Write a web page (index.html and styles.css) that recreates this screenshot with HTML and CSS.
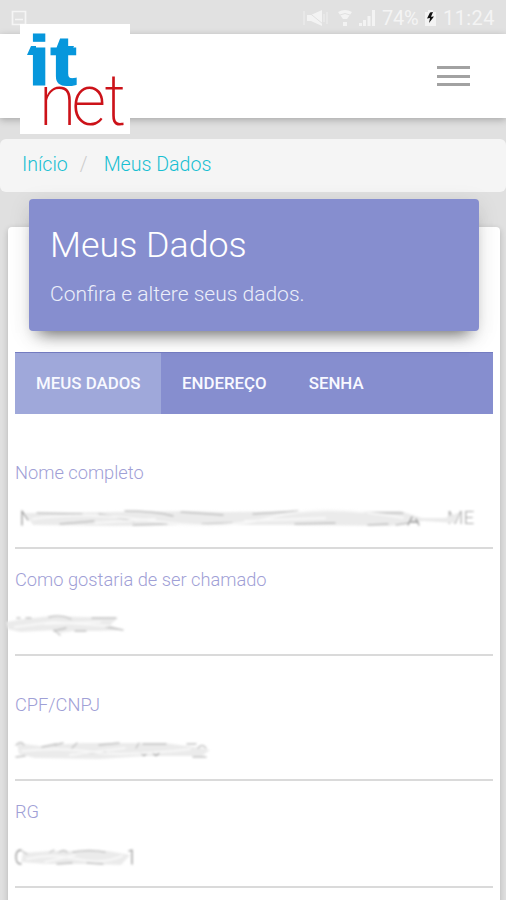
FILE: index.html
```html
<!DOCTYPE html>
<html lang="pt-BR">
<head>
<meta charset="utf-8">
<meta name="viewport" content="width=device-width, initial-scale=1">
<title>Meus Dados</title>
<link rel="stylesheet" href="styles.css">
</head>
<body>
<div class="status">
  <svg class="status-shot" width="16" height="16" viewBox="0 0 16 16"><path d="M1.5 1.5h13v13h-13zM4 9.5h8" /></svg>
  <div class="status-right">
    <svg class="mute" width="26" height="18" viewBox="0 0 26 18"><path class="line" d="M2 2v14M25 3v12M22 5v8"/><path d="M5 6h4l11-5v16l-11-5H5z"/><path class="cut" d="M5 2l16 13"/></svg>
    <svg class="wifi" width="16" height="18" viewBox="0 0 16 18"><path d="M1 3Q8-1 15 3L10 10H6zM6 13h4v4H6z"/><path class="cut" d="M3 6q5-3 10 0"/></svg>
    <svg class="signal" width="18" height="18" viewBox="0 0 18 18"><path d="M1 14h3v3H1zM5 11h3v6H5zM9.500 7h3v10h-3zM14 1h3v16h-3z"/></svg>
    <span class="percent">74%</span>
    <svg class="battery" width="11" height="16" viewBox="0 0 11 16"><path d="M3 0h5v2h3v14H0V2h3z"/><path class="bolt" d="M5 2.500L2 8.500l3-.5-1 5L9 6.500l-3 .3L8 2z"/></svg>
    <span class="clock">11:24</span>
  </div>
</div>
<header class="navbar">
  <a class="logo">
    <svg width="110" height="110" viewBox="0 0 110 110">
      <text class="logo-it" x="8" y="60.500" textLength="49" lengthAdjust="spacingAndGlyphs">it</text>
      <path class="logo-serif" d="M11 22h5v9H7zM48 22h6l-4 9h-2z"/>
      <text class="logo-net" transform="translate(0 101) scale(.93 1)" x="20.500 55.500 91" y="0">net</text>
    </svg>
  </a>
  <button class="menu" aria-label="Menu"><i></i><i></i><i></i></button>
</header>
<nav class="breadcrumb"><a>Início</a><span class="slash">/</span><a>Meus Dados</a></nav>
<main class="card">
  <div class="card-header">
    <h1>Meus Dados</h1>
    <p>Confira e altere seus dados.</p>
  </div>
  <ul class="tabs">
    <li class="active">MEUS DADOS</li><li>ENDEREÇO</li><li>SENHA</li>
  </ul>
  <form class="fields">
    <div class="field">
      <label>Nome completo</label>
      <svg class="value" width="478" height="40" viewBox="0 0 478 40">
        <path class="frag" d="M7 26V12l6 9"/>
        <text class="ghost" x="432" y="25">ME</text>
        <path class="smear" d="M10 14L90 13 175 12 210 13 300 12 385 12 407 19 430 19 445 13 440 24 408 22 375 27 270 26 180 26 100 27 18 26z"/>
        <path class="dark" d="M22 14l45 1M110 12q30 0 48 5M166 13l42 3M238 15l45-3M350 14l38 0M45 25l34-3M84 15l35 7M118 26l34-1M187 25l30-1M280 25l40-1M353 26l20-1M381 26l13-2"/>
        <path class="frag" d="M393 26l4-8M404 26l-3-6M396 23h7"/>
        <path class="light" d="M18 20q50-8 120 2t120-4 130 1M80 24l60-4M230 22l80-3"/>
      </svg>
    </div>
    <div class="field second">
      <label>Como gostaria de ser chamado</label>
      <svg class="value" width="478" height="40" viewBox="0 0 478 40">
        <path class="smear" d="M-9 16L9 13 36 10 103 12 95 19 108 24 85 25 58 25 45 27 42 24 5 26-7 23z"/>
        <path class="dark" d="M2 12h3M11 12h5M34 11q12-3 22 2M77 12h24M39 25l12-3M45 29l-6-5M60 25h11M91 21l17 3"/>
        <path class="light" d="M0 21l38-5 55 4M30 18l55-2"/>
      </svg>
    </div>
    <div class="field third">
      <label>CPF/CNPJ</label>
      <svg class="value" width="478" height="40" viewBox="0 0 478 40">
        <path class="smear" d="M2 12L25 15 67 12 150 12 186 17 195 19 187 25 130 25 85 28 20 27 4 23z"/>
        <path class="dark" d="M1 14q5-5 8 0M1 26l9-1M27 16l14-3M40 14l8-2M57 17l5-5M84 14l20-2M124 12l-3 5M128 13h23M172 13h9M183 17q4-5 8 0M178 26h13M61 23l30-2"/>
        <path class="frag" d="M126 22q3 5 6 0M138 22q3 5 6 0"/>
        <path class="light" d="M7 20q40-4 70 1t98-3M55 24l55-7"/>
      </svg>
    </div>
    <div class="field fourth">
      <label>RG</label>
      <svg class="value" width="478" height="40" viewBox="0 0 478 40">
        <path class="frag" d="M6 12q-5 0-5 7t5 7M114 13l3-1v14"/>
        <path class="smear" d="M8 15L35 13 93 13 115 17 106 27 75 26 30 26 6 24z"/>
        <path class="dark" d="M7 13l5 3M35 14l4-2M44 14q5-3 8 0M58 14q16-3 32 0M42 26l15-1M72 25l16 1"/>
        <path class="light" d="M12 21q25-6 50 0t45-3M30 24l30-7"/>
      </svg>
    </div>
  </form>
</main>
</body>
</html>
```
FILE: styles.css
```css
* { box-sizing: border-box; }
body {
  margin: 0;
  height: 900px;
  overflow: hidden;
  background: #e0e0e0;
  font-family: Roboto, "Liberation Sans", sans-serif;
  font-weight: 300;
}
.status {
  height: 34px;
  padding: 2px 10px 0 11px;
  display: flex;
  align-items: center;
  justify-content: space-between;
  background: #e1e1e1;
  color: #f4f4f4;
  font-size: 20px;
  font-weight: 400;
}
.status-shot { fill: none; stroke: #f5f5f5; stroke-width: 1.7; }
.status-right { display: flex; align-items: center; }
.status-right svg { fill: #f3f3f3; }
.status-right .line { fill: none; stroke: #ededed; stroke-width: 1.2; }
.status-right .cut { fill: none; stroke: #e1e1e1; stroke-width: 1; }
.status-right .bolt { fill: #111; }
.wifi { margin-left: 9px; }
.signal { margin-left: 5px; }
.percent { margin-left: 6px; width: 38px; white-space: nowrap; letter-spacing: -.2px; }
.battery { margin-left: 5px; }
.clock { margin-left: 7px; width: 53px; white-space: nowrap; letter-spacing: .4px; }
.navbar {
  position: relative;
  height: 84px;
  padding-right: 36px;
  display: flex;
  align-items: center;
  justify-content: flex-end;
  background: #fff;
  box-shadow: 0 2px 7px rgba(0, 0, 0, .25);
}
.logo { position: absolute; left: 20px; top: -10px; width: 110px; height: 110px; background: #fff; }
.logo svg { display: block; overflow: visible; }
.logo-it { font: 700 71px "Liberation Sans", sans-serif; fill: #0797dc; stroke: #0797dc; stroke-width: 1.2; }
.logo-serif { fill: #0797dc; }
.logo-net { font: 200 73px Roboto, sans-serif; fill: #cc1219; }
.menu {
  width: 33px;
  padding: 0;
  border: 0;
  background: none;
  display: flex;
  flex-direction: column;
  gap: 5.500px;
}
.menu i { height: 3px; background: #a2a2a2; }
.breadcrumb {
  height: 53px;
  margin-top: 21px;
  padding: 0 22px 3px;
  display: flex;
  align-items: center;
  background: #f5f5f5;
  border-radius: 6px;
  font-size: 19.6px;
  color: #18bfd2;
}
.slash { margin: 0 16px 0 12px; color: #ccc; }
.card {
  height: 700px;
  margin: 35px 6px 0 8px;
  padding: 0 7px;
  background: #fff;
  border-radius: 4px;
  box-shadow: 0 2px 6px rgba(0, 0, 0, .2);
  display: flow-root;
}
.card-header {
  position: relative;
  height: 132px;
  margin: -28px 14px 0;
  padding: 24px 21px 0;
  background: #868ecf;
  color: #fff;
  border-radius: 4px;
  box-shadow: 0 12px 16px -10px rgba(0, 0, 0, .6), 0 5px 22px rgba(0, 0, 0, .1);
}
.card-header h1 { margin: 0; font-size: 35.800px; line-height: 45px; font-weight: 300; white-space: nowrap; }
.card-header p { margin: 14px 0 0; font-size: 21px; line-height: 24px; color: #eceefa; white-space: nowrap; }
.tabs {
  height: 62px;
  margin: 21px 0 0;
  padding: 0;
  display: flex;
  list-style: none;
  background: #868ecf;
  border-top: 1px solid #747cc1;
  color: #f8f9ff;
  font-size: 16.850px;
  font-weight: 500;
  line-height: 61px;
}
.tabs li { padding: 0 21px; white-space: nowrap; }
.tabs .active { width: 146px; background: #9fa8da; }
.fields { margin-top: 46px; }
.field { height: 89px; border-bottom: 2px solid #dadada; }
.second, .fourth { margin-top: 18px; }
.third { margin-top: 36px; }
.field label { display: block; line-height: 26px; font-size: 18.250px; color: #9fa0d6; white-space: nowrap; }
.value { display: block; margin-top: 13px; overflow: visible; filter: blur(.8px); }
.value path { stroke-linecap: round; stroke-linejoin: round; }
.ghost { font-size: 19px; fill: #aaa; }
.smear { fill: #ebebeb; }
.dark { fill: none; stroke: #c2c2c2; stroke-width: 1.3; }
.light { fill: none; stroke: #f8f8f8; stroke-width: 2; }
.frag { fill: none; stroke: #999; stroke-width: 1.3; }
```
